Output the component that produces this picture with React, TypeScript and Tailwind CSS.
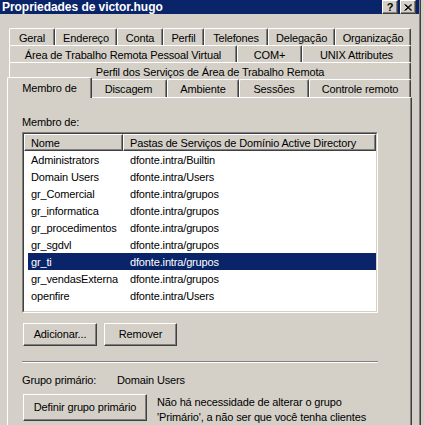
import React from "react";

const tabRows = [
  [
    { label: "Geral", w: "w-[46px]" },
    { label: "Endereço", w: "w-[62px]" },
    { label: "Conta", w: "w-[46px]" },
    { label: "Perfil", w: "w-[41px]" },
    { label: "Telefones", w: "w-[64px]" },
    { label: "Delegação", w: "w-[67px]" },
    { label: "Organização", w: "w-[76px]" },
  ],
  [
    { label: "Área de Trabalho Remota Pessoal Virtual", w: "w-[228px]" },
    { label: "COM+", w: "w-[65px]" },
    { label: "UNIX Attributes", w: "w-[109px]" },
  ],
  [{ label: "Perfil dos Serviços de Área de Trabalho Remota", w: "w-[402px]" }],
];

const lastRow = [
  { label: "Discagem", w: "w-[77px]" },
  { label: "Ambiente", w: "w-[72px]" },
  { label: "Sessões", w: "w-[70px]" },
  { label: "Controle remoto", w: "w-[102px]" },
];

const groups = [
  { name: "Administrators", path: "dfonte.intra/Builtin" },
  { name: "Domain Users", path: "dfonte.intra/Users" },
  { name: "gr_Comercial", path: "dfonte.intra/grupos" },
  { name: "gr_informatica", path: "dfonte.intra/grupos" },
  { name: "gr_procedimentos", path: "dfonte.intra/grupos" },
  { name: "gr_sgdvl", path: "dfonte.intra/grupos" },
  { name: "gr_ti", path: "dfonte.intra/grupos", selected: true },
  { name: "gr_vendasExterna", path: "dfonte.intra/grupos" },
  { name: "openfire", path: "dfonte.intra/Users" },
];

function Tab({ label, w, h = "h-[17px]" }: { label: string; w: string; h?: string }) {
  return (
    <div
      className={`${w} ${h} flex items-center justify-center pt-[2px] border-l border-t border-r border-l-white border-t-white border-r-[#404040] rounded-t-[2px] shadow-[inset_-1px_0_0_#808080] bg-[#d4d0c8] whitespace-nowrap`}
    >
      {label}
    </div>
  );
}

function Button({ children, className }: { children: React.ReactNode; className: string }) {
  return (
    <button
      type="button"
      className={`${className} flex items-center justify-center border border-t-white border-l-white border-r-[#404040] border-b-[#404040] shadow-[inset_-1px_-1px_0_#808080] bg-[#d4d0c8] text-black`}
    >
      {children}
    </button>
  );
}

export default function App() {
  return (
    <div className="w-[424px] h-[425px] overflow-hidden flex bg-[#d4d0c8] font-['Liberation_Sans',Arial,sans-serif] text-[11px] leading-[13px] tracking-[-0.15px] text-black">
      <div className="w-[419px] flex flex-col shrink-0">
        <div className="h-[19px] bg-[#0a246a] flex items-center justify-between pl-[2px] pr-[3px]">
          <span className="text-white font-bold text-[12px] tracking-[-0.05px]">Propriedades de victor.hugo</span>
          <div className="flex gap-[2px]">
            <div className="w-[16px] h-[14px] flex items-center justify-center border border-t-white border-l-white border-r-[#404040] border-b-[#404040] shadow-[inset_-1px_-1px_0_#808080] bg-[#d4d0c8] font-bold text-[11px] leading-none tracking-normal">
              ?
            </div>
            <div className="w-[16px] h-[14px] flex items-center justify-center border border-t-white border-l-white border-r-[#404040] border-b-[#404040] shadow-[inset_-1px_-1px_0_#808080] bg-[#d4d0c8]">
              <svg width="8" height="7" viewBox="0 0 8 7">
                <path d="M0.5 0.5 L7 6.5 M1.5 0.5 L8 6.5 M7 0.5 L0.5 6.5 M8 0.5 L1.5 6.5" stroke="#000" strokeWidth="1" />
              </svg>
            </div>
          </div>
        </div>

        <div className="flex-1 flex flex-col pt-[14px]">
          <div className="ml-[9px] w-[402px] flex flex-col">
            {tabRows.map((row, i) => (
              <div key={i} className="flex h-[17px]">
                {row.map((t) => (
                  <Tab key={t.label} label={t.label} w={t.w} />
                ))}
              </div>
            ))}
            <div className="flex h-[18px] items-end">
              <div className="w-[85px] h-[21px] -mx-[2px] -mb-px relative z-10 flex items-center justify-center border-l border-t border-r border-l-white border-t-white border-r-[#404040] rounded-t-[2px] shadow-[inset_-1px_0_0_#808080] bg-[#d4d0c8]">
                Membro de
              </div>
              {lastRow.map((t) => (
                <Tab key={t.label} label={t.label} w={t.w} h="h-[18px]" />
              ))}
            </div>
          </div>

          <div className="ml-[7px] w-[405px] flex-1 border-l border-t border-r border-l-white border-t-white border-r-[#404040] shadow-[inset_-1px_0_0_#808080] pl-[14px] pt-[18px]">
            <div>Membro de:</div>
            <div className="mt-[3px] w-[356px] h-[181px] border border-t-[#808080] border-l-[#808080] border-r-white border-b-white">
              <div className="h-full border border-t-[#404040] border-l-[#404040] border-r-[#d4d0c8] border-b-[#d4d0c8] bg-white">
                <div className="flex h-[17px]">
                  <div className="w-[99px] flex items-center pl-[6px] pt-[1px] border border-t-white border-l-white border-r-[#404040] border-b-[#404040] shadow-[inset_-1px_-1px_0_#808080] bg-[#d4d0c8]">
                    Nome
                  </div>
                  <div className="w-[253px] flex items-center pl-[6px] pt-[1px] border border-t-white border-l-white border-r-[#404040] border-b-[#404040] shadow-[inset_-1px_-1px_0_#808080] bg-[#d4d0c8] whitespace-nowrap">
                    Pastas de Serviços de Domínio Active Directory
                  </div>
                </div>
                {groups.map((g) => (
                  <div key={g.name} className="h-[17px] pl-[4px] flex">
                    <div className={`flex-1 flex items-center pt-[1px] ${g.selected ? "bg-[#0a246a] text-white" : ""}`}>
                      <div className="w-[95px] pl-[3px]">{g.name}</div>
                      <div className="pl-[7px]">{g.path}</div>
                    </div>
                  </div>
                ))}
              </div>
            </div>

            <div className="mt-[10px] flex gap-[7px] ml-[1px]">
              <Button className="w-[74px] h-[23px]">Adicionar...</Button>
              <Button className="w-[73px] h-[23px]">Remover</Button>
            </div>

            <div className="mt-[15px] w-[356px] h-[2px] border-t border-b border-t-[#808080] border-b-white" />

            <div className="mt-[11px] flex">
              <div className="w-[95px]">Grupo primário:</div>
              <div>Domain Users</div>
            </div>

            <div className="mt-[7px] flex items-start gap-[10px] ml-[1px]">
              <Button className="w-[124px] h-[27px] shrink-0">Definir grupo primário</Button>
              <div className="leading-[15px] pt-[1px] whitespace-nowrap">
                Não há necessidade de alterar o grupo
                <br />
                'Primário', a não ser que você tenha clientes
              </div>
            </div>
          </div>
        </div>
      </div>
      <div className="w-[1px] bg-[#808080]" />
      <div className="w-[1px] bg-[#404040]" />
      <div className="flex-1 bg-[#d4d0c8]" />
    </div>
  );
}
